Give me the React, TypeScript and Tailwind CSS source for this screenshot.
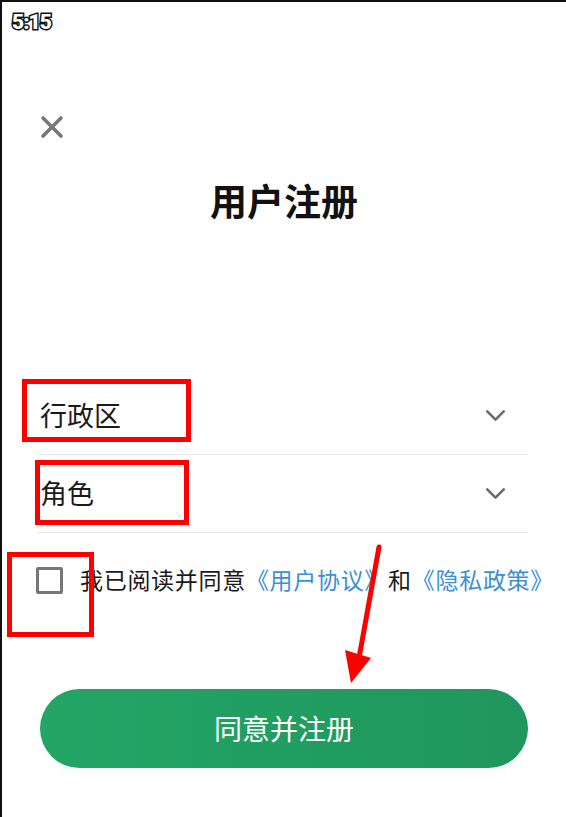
import { X, ChevronDown } from 'lucide-react';

const cjk = "font-['Noto_Sans','Noto_Sans_CJK_SC',sans-serif]";

const fields = [
  { label: '行政区', box: 'left-[20px] top-[377px] w-[169px] h-[63px]' },
  { label: '角色', box: 'left-[33px] top-[458px] w-[154px] h-[65px]' },
];

function SelectRow({ label }: { label: string }) {
  return (
    <div className="h-[78px] flex items-center justify-between border-b border-[#e8e8e8] pl-[3px] pr-[16px]">
      <span className="text-[27px] text-[#1a1a1a] leading-none">{label}</span>
      <ChevronDown size={33} strokeWidth={1.9} className="text-[#6b6b6b]" />
    </div>
  );
}

export default function App() {
  return (
    <div className={`relative w-[566px] h-[817px] bg-white border-l-2 border-t-2 border-[#111] overflow-hidden ${cjk}`}>
      <div className="pl-[10px] pt-[5px] h-[30px]">
        <span className="font-['Roboto',sans-serif] font-black text-[21px] text-white tracking-[-1px] [-webkit-text-stroke:3px_#111] [paint-order:stroke_fill]">
          5:15
        </span>
      </div>

      <div className="pl-[32px] pt-[77px]">
        <X size={36} strokeWidth={2.4} className="text-[#777]" />
      </div>

      <h1 className="mt-[35px] text-center text-[37px] font-bold text-[#111] leading-[44px]">用户注册</h1>

      <div className="mt-[153px] ml-[35px] w-[491px]">
        {fields.map((f) => (
          <SelectRow key={f.label} label={f.label} />
        ))}
      </div>

      <div className="mt-[34px] ml-[34px] flex items-center gap-[17px]">
        <div className="w-[27px] h-[27px] border-[3px] border-[#777] rounded-[2px]" />
        <p className="text-[23px] text-[#1a1a1a] leading-none whitespace-nowrap tracking-[0.7px]">
          我已阅读并同意<span className="text-[#3b8fd3]">《用户协议》</span>和<span className="text-[#3b8fd3]">《隐私政策》</span>
        </p>
      </div>

      <div className="mt-[95px] mx-[38px]">
        <button className="w-[488px] h-[79px] rounded-full bg-gradient-to-r from-[#23a566] to-[#1f965d] text-white text-[28px] shadow-[0_6px_10px_rgba(0,0,0,0.02)]">
          同意并注册
        </button>
      </div>

      {fields.map((f) => (
        <div key={f.label} className={`absolute border-[5px] border-[#f00] ${f.box}`} />
      ))}
      <div className="absolute left-[5px] top-[550px] w-[87px] h-[85px] border-[5px] border-[#f00]" />

      <svg className="absolute left-0 top-0 pointer-events-none" width="566" height="817">
        <line x1="377" y1="545" x2="357" y2="656" stroke="#f00" strokeWidth="5" strokeLinecap="round" />
        <polygon points="343,648 369,656 349,681" fill="#f00" />
      </svg>
    </div>
  );
}
